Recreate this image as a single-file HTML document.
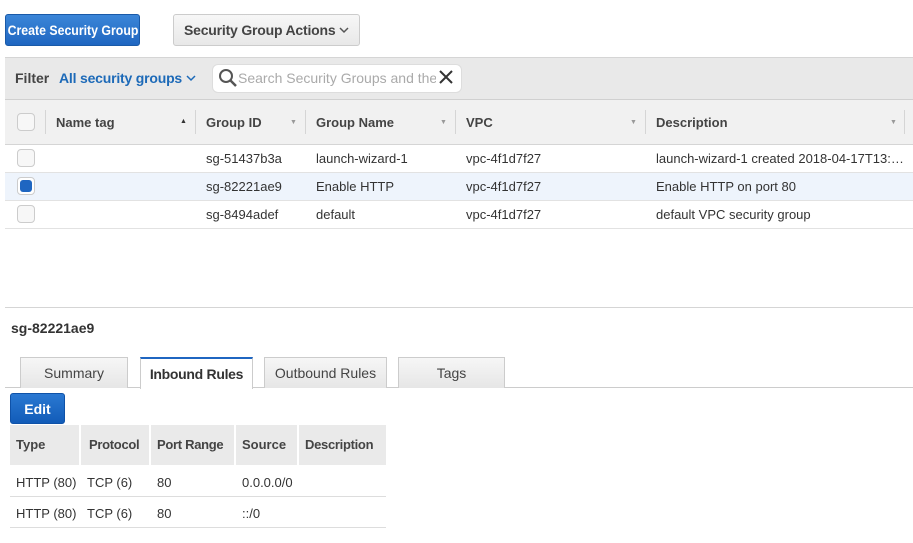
<!DOCTYPE html>
<html><head><style>
*{box-sizing:border-box;margin:0;padding:0}
body{width:913px;height:543px;background:#fff;font-family:"Liberation Sans",sans-serif;color:#333;position:relative;overflow:hidden;font-size:13px}
.a{position:absolute}
.btn{position:absolute;border-radius:3px;font-weight:bold;font-size:14px;line-height:30px;text-align:center;white-space:nowrap}
.hd{font-weight:bold;color:#444;font-size:13px}
.cb{position:absolute;width:18px;height:18px;border:1px solid #ccc;border-radius:4px;background:#f7f7f7;left:17px}
.sep{position:absolute;width:1px;background:#d5d5d5;top:110px;height:24px}
.arr{position:absolute;font-size:7px;color:#999;top:119px}
.row{position:absolute;left:5px;width:908px;border-bottom:1px solid #e2e2e2}
.tab{position:absolute;top:357px;height:31px;border:1px solid #ccc;border-bottom:none;background:linear-gradient(#f6f6f6,#e6e6e6);font-size:14px;color:#444;text-align:center;line-height:30px;white-space:nowrap}
.th{position:absolute;top:425px;height:40px;background:#eaeaea;font-weight:bold;font-size:13px;color:#444;line-height:40px;padding-left:6px;border-right:2px solid #fff;white-space:nowrap}
.td{position:absolute;font-size:13px;color:#333;white-space:nowrap}
.sx{position:absolute;left:50%;top:0;transform:translateX(-50%) scaleX(0.88)}
</style></head><body>
<div class="btn" style="left:5px;top:14px;width:135px;height:32px;background:linear-gradient(#3b86d8,#1f66c1);color:#fff;border:1px solid #1a5aa8"><span class="sx">Create Security Group</span></div>
<div class="btn" style="left:173px;top:14px;width:187px;height:32px;background:linear-gradient(#f7f7f7,#e8e8e8);color:#444;border:1px solid #ccc;text-align:left;padding-left:10px;font-size:14px;letter-spacing:-0.2px">Security Group Actions</div>
<svg class="a" style="left:339px;top:27px" width="10" height="7"><path d="M1 1L5 5L9 1" fill="none" stroke="#555" stroke-width="1.5"/></svg>

<div class="a" style="left:5px;top:57px;width:908px;height:43px;background:#e9e9e9;border-top:1px solid #d5d5d5;border-bottom:1px solid #d0d0d0"></div>
<div class="a" style="left:15px;top:70px;font-weight:bold;font-size:14px;color:#444">Filter</div>
<div class="a" style="left:59px;top:70px;font-weight:bold;font-size:14px;color:#1d6ab8;white-space:nowrap;letter-spacing:-0.2px">All security groups</div>
<svg class="a" style="left:186px;top:75px" width="10" height="7"><path d="M1 1L5 5L9 1" fill="none" stroke="#1d6ab8" stroke-width="1.5"/></svg>
<div class="a" style="left:212px;top:64px;width:250px;height:29px;background:#fff;border:1px solid #ddd;border-radius:6px"></div>
<svg class="a" style="left:218px;top:68px" width="20" height="20" viewBox="0 0 20 20"><circle cx="8" cy="8" r="6" fill="none" stroke="#555" stroke-width="2"/><path d="M12.5 12.5L18 18" stroke="#555" stroke-width="2.5"/></svg>
<div class="a" style="left:238px;top:70px;font-size:14px;color:#aaa;width:198px;overflow:hidden;white-space:nowrap">Search Security Groups and their</div>
<svg class="a" style="left:439px;top:70px" width="14" height="14"><path d="M1 1L13 13M13 1L1 13" stroke="#333" stroke-width="2"/></svg>

<div class="a" style="left:5px;top:100px;width:908px;height:45px;background:#f1f1f1;border-bottom:1px solid #d5d5d5"></div>
<div class="cb" style="top:113px"></div>
<div class="sep" style="left:45px"></div>
<div class="a hd" style="left:56px;top:115px">Name tag</div>
<div class="arr" style="left:180px;color:#333;top:118px">&#9650;</div>
<div class="sep" style="left:195px"></div>
<div class="a hd" style="left:206px;top:115px">Group ID</div>
<div class="arr" style="left:290px">&#9660;</div>
<div class="sep" style="left:305px"></div>
<div class="a hd" style="left:316px;top:115px">Group Name</div>
<div class="arr" style="left:440px">&#9660;</div>
<div class="sep" style="left:455px"></div>
<div class="a hd" style="left:466px;top:115px">VPC</div>
<div class="arr" style="left:630px">&#9660;</div>
<div class="sep" style="left:645px"></div>
<div class="a hd" style="left:656px;top:115px">Description</div>
<div class="arr" style="left:890px">&#9660;</div>
<div class="sep" style="left:904px"></div>

<div class="row" style="top:145px;height:28px"></div>
<div class="row" style="top:173px;height:28px;background:#eef4fc"></div>
<div class="row" style="top:201px;height:28px"></div>
<div class="cb" style="top:149px"></div>
<div class="cb" style="top:177px;background:#fff"><div style="margin:2px;width:12px;height:12px;border-radius:3px;background:#1f66c1"></div></div>
<div class="cb" style="top:205px"></div>
<div class="td" style="left:206px;top:151px">sg-51437b3a</div>
<div class="td" style="left:316px;top:151px">launch-wizard-1</div>
<div class="td" style="left:466px;top:151px">vpc-4f1d7f27</div>
<div class="td" style="left:656px;top:151px">launch-wizard-1 created 2018-04-17T13:…</div>
<div class="td" style="left:206px;top:179px">sg-82221ae9</div>
<div class="td" style="left:316px;top:179px">Enable HTTP</div>
<div class="td" style="left:466px;top:179px">vpc-4f1d7f27</div>
<div class="td" style="left:656px;top:179px">Enable HTTP on port 80</div>
<div class="td" style="left:206px;top:207px">sg-8494adef</div>
<div class="td" style="left:316px;top:207px">default</div>
<div class="td" style="left:466px;top:207px">vpc-4f1d7f27</div>
<div class="td" style="left:656px;top:207px">default VPC security group</div>

<div class="a" style="left:5px;top:307px;width:908px;height:1px;background:#d5d5d5"></div>
<div class="a" style="left:11px;top:320px;font-weight:bold;font-size:14px;color:#333">sg-82221ae9</div>

<div class="a" style="left:5px;top:387px;width:908px;height:1px;background:#ccc"></div>
<div class="tab" style="left:20px;width:108px">Summary</div>
<div class="tab" style="left:140px;width:113px;height:32px;background:#fff;border-top:2px solid #1f66c1;font-weight:bold;color:#333;letter-spacing:-0.3px">Inbound Rules</div>
<div class="tab" style="left:264px;width:123px">Outbound Rules</div>
<div class="tab" style="left:398px;width:107px">Tags</div>

<div class="btn" style="left:10px;top:393px;width:55px;height:31px;background:linear-gradient(#2a78d2,#125cb8);color:#fff;border:1px solid #0f52a8">Edit</div>

<div class="th" style="left:10px;width:71px">Type</div>
<div class="th" style="left:81px;width:70px;padding-left:8px;letter-spacing:-0.3px">Protocol</div>
<div class="th" style="left:151px;width:85px;letter-spacing:-0.3px">Port Range</div>
<div class="th" style="left:236px;width:63px">Source</div>
<div class="th" style="left:299px;width:87px;border-right:none;letter-spacing:-0.3px">Description</div>
<div class="a" style="left:10px;top:496px;width:376px;height:1px;background:#ddd"></div>
<div class="a" style="left:10px;top:527px;width:376px;height:1px;background:#ddd"></div>
<div class="td" style="left:16px;top:475px">HTTP (80)</div>
<div class="td" style="left:87px;top:475px">TCP (6)</div>
<div class="td" style="left:157px;top:475px">80</div>
<div class="td" style="left:242px;top:475px">0.0.0.0/0</div>
<div class="td" style="left:16px;top:506px">HTTP (80)</div>
<div class="td" style="left:87px;top:506px">TCP (6)</div>
<div class="td" style="left:157px;top:506px">80</div>
<div class="td" style="left:242px;top:506px">::/0</div>
</body></html>
